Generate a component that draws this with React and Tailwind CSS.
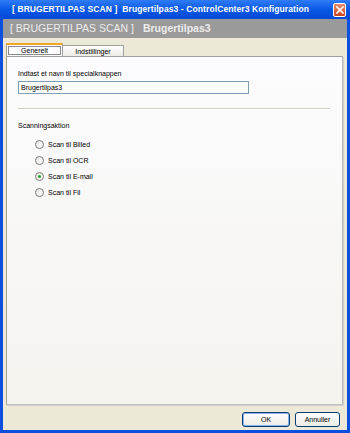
export default function App() {
  const radios = [
    { label: "Scan til Billed", checked: false },
    { label: "Scan til OCR", checked: false },
    { label: "Scan til E-mail", checked: true },
    { label: "Scan til Fil", checked: false },
  ];
  return (
    <div
      className="w-[350px] h-[433px] flex flex-col bg-[#0a4fe0] overflow-hidden"
      style={{ fontFamily: '"Liberation Sans", Arial, sans-serif' }}
    >
      {/* Title bar */}
      <div className="h-[19px] shrink-0 flex items-center pl-[12px] pr-[4px] bg-gradient-to-b from-[#2f7cf7] via-[#0858e6] to-[#0349d6]">
        <div className="flex-1 text-white font-bold text-[8.5px] whitespace-pre tracking-[0.1px]">
          {"[ BRUGERTILPAS SCAN ]  Brugertilpas3 - ControlCenter3 Konfiguration"}
        </div>
        <div className="w-[13px] h-[14px] rounded-[2px] border border-white bg-gradient-to-b from-[#e88a6a] to-[#c9451f] flex items-center justify-center">
          <svg width="8" height="8" viewBox="0 0 8 8">
            <path d="M1 1 L7 7 M7 1 L1 7" stroke="white" strokeWidth="1.6" strokeLinecap="square" />
          </svg>
        </div>
      </div>
      {/* Body */}
      <div className="flex-1 mx-[3px] mb-[3px] flex flex-col bg-[#ece9d8]">
        {/* Gray header */}
        <div className="h-[19px] shrink-0 bg-[#9a9a9a] flex items-center pl-[7px] text-[10.5px] text-[#ececec] whitespace-pre">
          <span>{"[ BRUGERTILPAS SCAN ]"}</span>
          <span className="ml-[9px] font-bold">Brugertilpas3</span>
        </div>
        {/* Tabs */}
        <div className="mt-[5px] ml-[3px] mr-[4px] flex-1 flex flex-col">
          <div className="flex items-end h-[13px] relative z-10">
            <div className="h-[13px] w-[57px] border-t-2 border-t-[#f3a526] border-x border-x-[#a0a0a0] bg-[#fcfcfe] flex items-start justify-center">
              <div className="mt-[1px] px-[4px] h-[9px] w-[53px] border border-[#8a8a8a] flex items-center justify-center text-[7px] leading-none text-black">
                Generelt
              </div>
            </div>
            <div className="h-[11px] w-[61px] border-t border-r border-[#a0a0a0] bg-gradient-to-b from-[#fefefe] to-[#ecebe6] flex items-center justify-center text-[7px] leading-none text-black">
              Indstillinger
            </div>
          </div>
          <div className="h-[349px] w-[337px] border border-[#a0a0a0] border-b-[#c0c0c0] border-r-[#b8b8b8] bg-gradient-to-b from-[#fcfcfe] to-[#f4f3ee] shadow-[1px_1px_0_#d0d0d0] pl-[11px] text-[7px] text-black">
            <div className="mt-[13px] leading-none">Indtast et navn til specialknappen</div>
            <div className="mt-[4px] h-[13px] w-[231px] border border-[#7f9db9] bg-white flex items-center pl-[2px] leading-none">
              Brugertilpas3
            </div>
            <div className="mt-[14px] w-[312px] h-[2px] border-t border-t-[#d0d0bf] border-b border-b-white" />
            <div className="mt-[12px] leading-none">Scanningsaktion</div>
            <div className="mt-[11px] ml-[17px] flex flex-col gap-[7px]">
              {radios.map((r) => (
                <div key={r.label} className="flex items-center h-[9px]">
                  <div className="w-[9px] h-[9px] rounded-full border border-[#7a7a7a] bg-gradient-to-br from-[#e6e6e0] to-white flex items-center justify-center">
                    {r.checked && <div className="w-[3px] h-[3px] rounded-full bg-[#21a121]" />}
                  </div>
                  <span className="ml-[4px] leading-none">{r.label}</span>
                </div>
              ))}
            </div>
          </div>
          {/* Buttons */}
          <div className="flex justify-end gap-[5px] mt-[7px] mr-[3px]">
            <button className="w-[48px] h-[15px] rounded-[3px] border border-[#003c74] bg-gradient-to-b from-white to-[#ecebe6] shadow-[inset_0_0_0_1px_#8db2f1] text-[7px] leading-none text-black flex items-center justify-center">
              OK
            </button>
            <button className="w-[45px] h-[15px] rounded-[3px] border border-[#003c74] bg-gradient-to-b from-white to-[#ecebe6] text-[7px] leading-none text-black flex items-center justify-center">
              Annuller
            </button>
          </div>
        </div>
      </div>
    </div>
  );
}
